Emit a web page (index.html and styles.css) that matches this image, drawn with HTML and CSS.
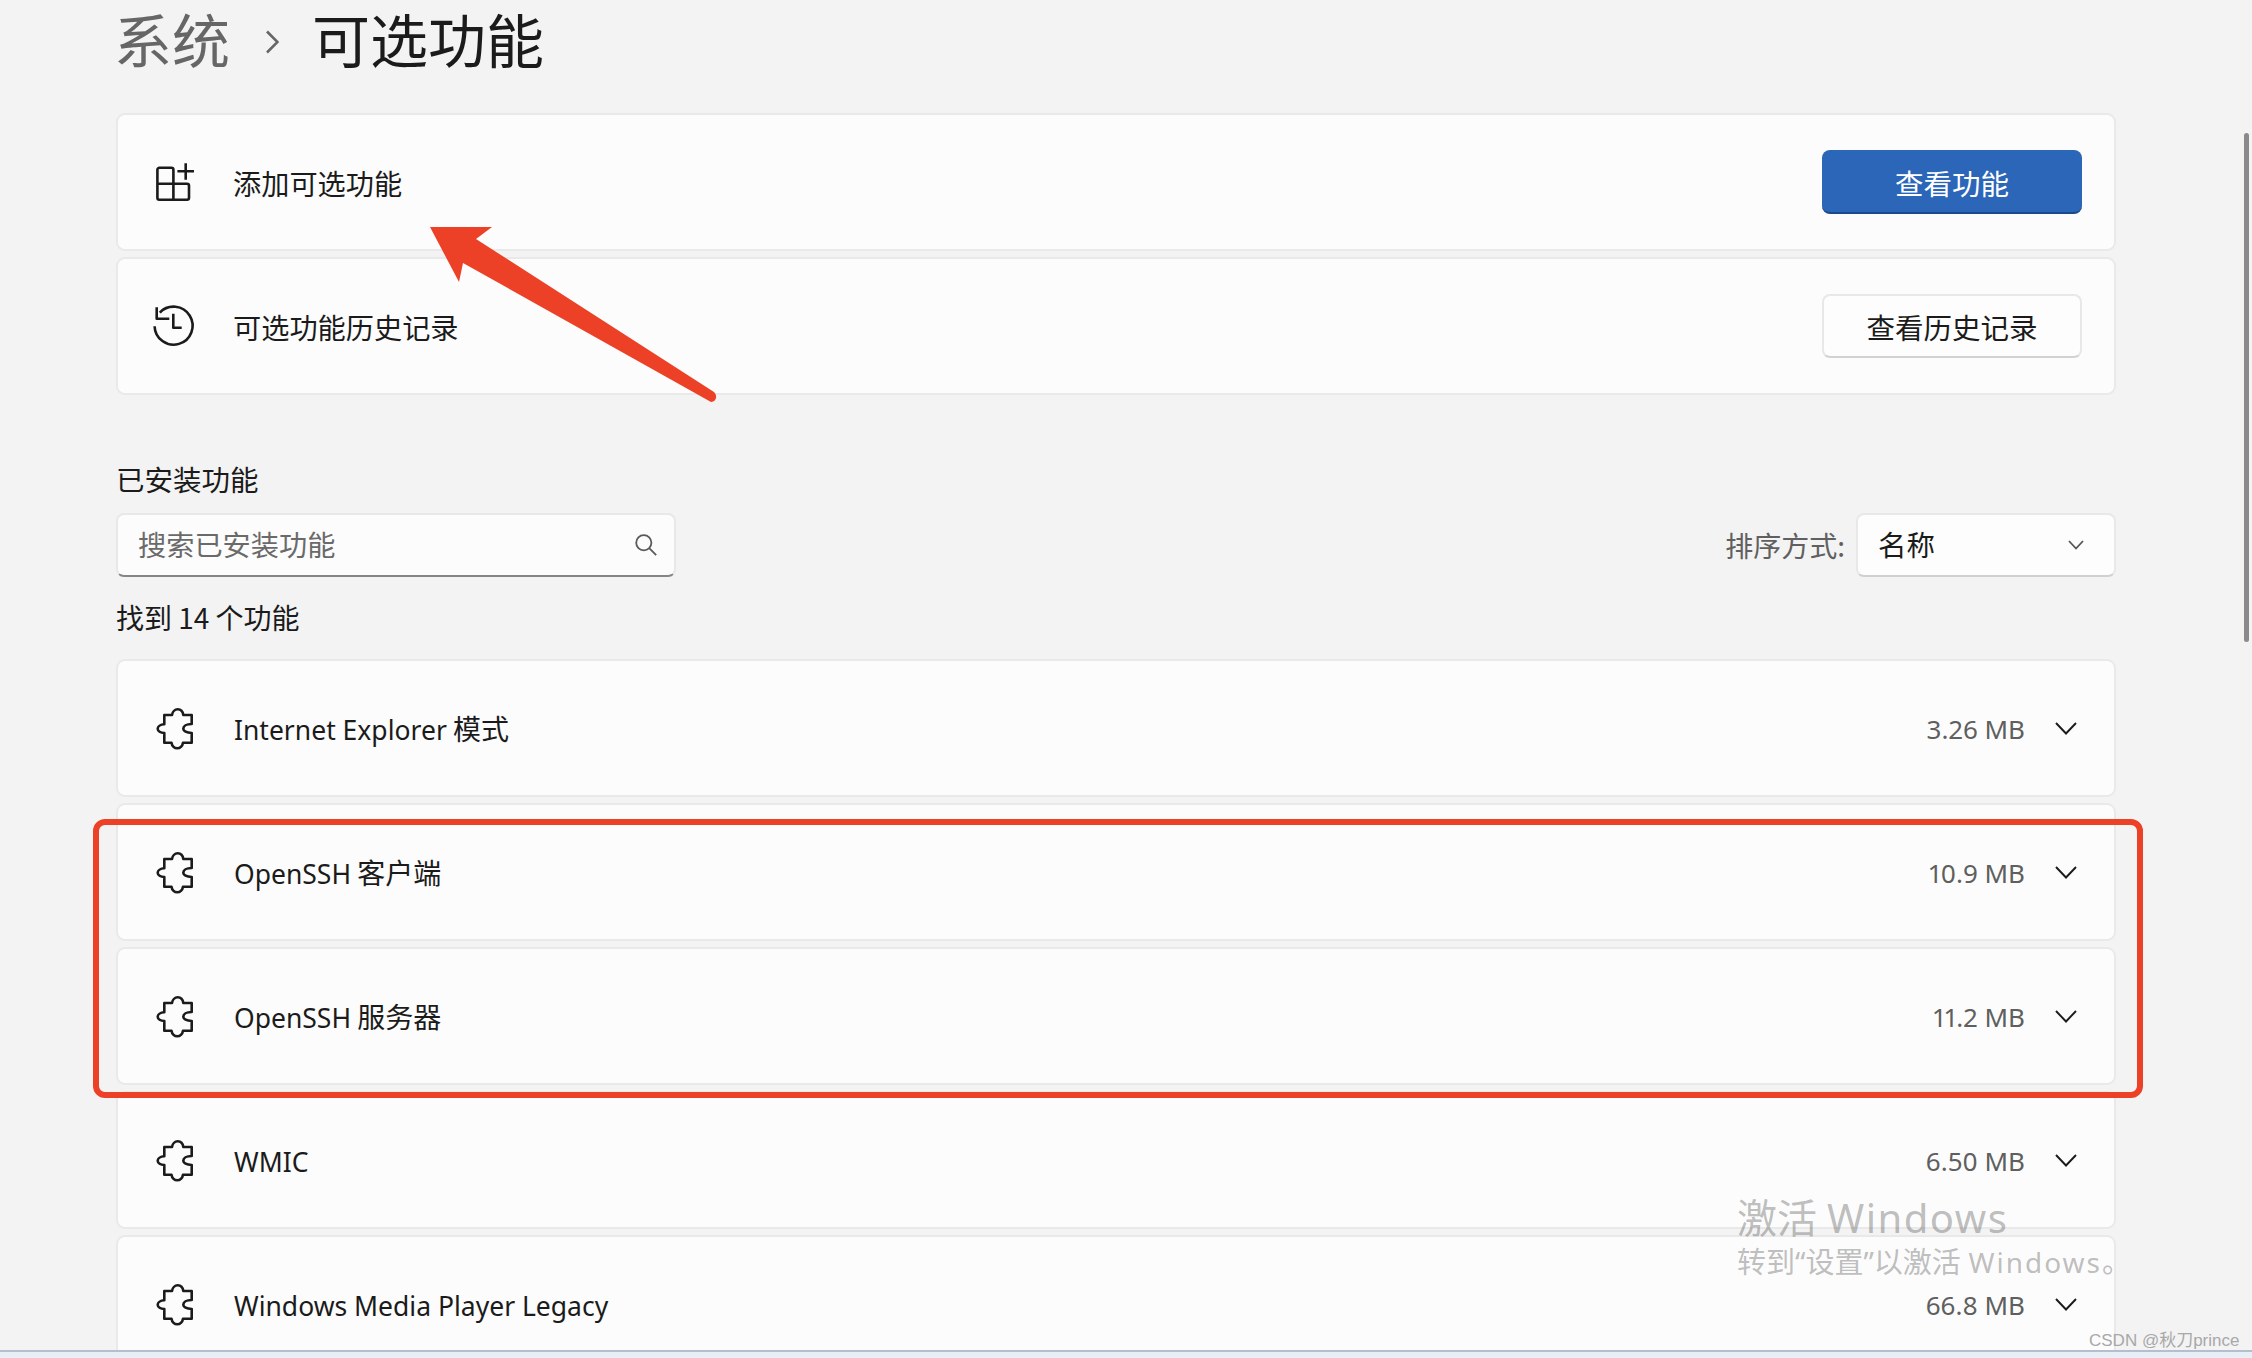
FILE: index.html
```html
<!DOCTYPE html>
<html lang="zh-CN">
<head>
<meta charset="utf-8">
<title>可选功能</title>
<link rel="stylesheet" href="styles.css">
</head>
<body>
<svg class="defs" width="0" height="0" aria-hidden="true">
  <symbol id="puzzle" viewBox="0 0 42 46">
    <path d="M10.3 9H18C18.5 5.5 21 3.3 23.7 3.3C26.4 3.3 28.8 5.5 29.3 9H37.7V18C32.5 18 29.3 20 29.3 22.7C29.3 25 32.5 27 37.7 27V36.7H29C28.5 40 26 42.3 23.2 42.3C20.5 42.3 18 40 17.5 36.7H10.3V27C6.5 26.8 3.7 25 3.7 22.7C3.7 20.4 6.5 18.5 10.3 18.3Z"/>
  </symbol>
  <symbol id="chev" viewBox="0 0 22 13">
    <path d="M1 1L11 11.5L21 1"/>
  </symbol>
</svg>
<main class="page">
  <header class="crumbs">
    <span class="crumb-parent">系统</span>
    <svg class="crumb-sep" viewBox="0 0 14 24"><path d="M2 1.5L12.5 12L2 22.5"/></svg>
    <h1 class="crumb-current">可选功能</h1>
  </header>

  <section class="stack">
    <div class="card">
      <svg class="card-icon" viewBox="0 0 42 46"><path d="M3.4 24.8V10.8a2 2 0 0 1 2-2H17.4a2 2 0 0 1 2 2V40.8M3.4 24.8H33a2 2 0 0 1 2 2V38.8a2 2 0 0 1-2 2H5.4a2 2 0 0 1-2-2ZM31.7 4.2V20.8M23.4 12.2H40"/></svg>
      <span class="card-title card-title-cjk">添加可选功能</span>
      <button class="btn btn-primary">查看功能</button>
    </div>
    <div class="card">
      <svg class="card-icon" viewBox="0 0 42 46"><path d="M5.8 9.6A19 19 0 1 1 .6 23.2M2.7 4.2V15.8H15.3M19.3 10.8V24.8H27.7"/></svg>
      <span class="card-title card-title-cjk">可选功能历史记录</span>
      <button class="btn">查看历史记录</button>
    </div>
  </section>

  <h2 class="section-label">已安装功能</h2>
  <div class="filters">
    <div class="search">
      <span class="search-text">搜索已安装功能</span>
      <svg class="search-icon" viewBox="0 0 22 22"><circle cx="8.8" cy="8.8" r="7.6"/><path d="M14.2 14.2L21.2 21.2"/></svg>
    </div>
    <div class="sort">
      <span class="sort-label">排序方式:</span>
      <div class="select">
        <span class="select-value">名称</span>
        <svg class="select-chev" viewBox="0 0 16 10"><path d="M1 1L8 8.5L15 1"/></svg>
      </div>
    </div>
  </div>
  <p class="count">找到 14 个功能</p>

  <section class="stack feature-list">
    <div class="card">
      <svg class="card-icon"><use href="#puzzle"/></svg>
      <span class="card-title"><span class="latin">Internet Explorer</span> 模式</span>
      <span class="size">3.26 MB</span>
      <svg class="row-chev"><use href="#chev"/></svg>
    </div>
    <div class="card">
      <svg class="card-icon"><use href="#puzzle"/></svg>
      <span class="card-title"><span class="latin">OpenSSH</span> 客户端</span>
      <span class="size">10.9 MB</span>
      <svg class="row-chev"><use href="#chev"/></svg>
    </div>
    <div class="card">
      <svg class="card-icon"><use href="#puzzle"/></svg>
      <span class="card-title"><span class="latin">OpenSSH</span> 服务器</span>
      <span class="size">11.2 MB</span>
      <svg class="row-chev"><use href="#chev"/></svg>
    </div>
    <div class="card">
      <svg class="card-icon"><use href="#puzzle"/></svg>
      <span class="card-title"><span class="latin">WMIC</span></span>
      <span class="size">6.50 MB</span>
      <svg class="row-chev"><use href="#chev"/></svg>
    </div>
    <div class="card">
      <svg class="card-icon"><use href="#puzzle"/></svg>
      <span class="card-title"><span class="latin">Windows Media Player Legacy</span></span>
      <span class="size">66.8 MB</span>
      <svg class="row-chev"><use href="#chev"/></svg>
    </div>
  </section>
</main>

<div class="scrollbar"></div>
<div class="red-box"></div>
<svg class="red-arrow" viewBox="0 0 300 190">
  <path d="M10 7H72L56 19L294 172C298 176 296 182 291 182L43 43L39 62Z"/>
</svg>
<div class="activate">
  <div class="activate-big">激活<span class="activate-latin">Windows</span></div>
  <div class="activate-small">转到“设置”以激活 <span class="activate-latin">Windows</span>。</div>
</div>
<div class="bottom-strip"></div>
<div class="credit">CSDN @秋刀prince</div>
</body>
</html>
```

FILE: styles.css
```css
* { box-sizing: border-box; }
html, body { margin: 0; height: 100%; overflow: hidden; }
body {
  position: relative;
  width: 2252px;
  height: 1358px;
  background: #f3f3f3;
  color: #1b1b1b;
  font-family: "Noto Sans CJK SC", "Noto Sans", sans-serif;
  font-size: 28px;
}
.defs { position: absolute; }
.page { width: 2116px; padding-left: 116px; }

.crumbs { display: flex; align-items: center; height: 113px; padding-bottom: 37px; }
.crumb-parent { flex: none; font-size: 58px; line-height: 76px; color: #666; width: 116px; margin-left: -2px; white-space: nowrap; }
.crumb-sep { flex: none; width: 14px; height: 24px; margin: 7px 33px 0 35px; fill: none; stroke: #666; stroke-width: 2.6; }
.crumb-current { margin: 0; font-size: 58px; line-height: 76px; font-weight: 400; color: #1b1b1b; white-space: nowrap; }

.stack { display: flex; flex-direction: column; gap: 6px; }
.card {
  display: flex;
  align-items: center;
  height: 138px;
  padding: 0 32px 0 38px;
  background: #fcfcfc;
  border: 2px solid #e9e9e9;
  border-radius: 9px;
}
.feature-list .card { padding-top: 2px; }
.card-icon {
  flex: none;
  width: 42px;
  height: 46px;
  margin-right: 38px;
  margin-left: -2px;
  overflow: visible;
  fill: none;
  stroke: #1b1b1b;
  stroke-width: 2.6;
  stroke-linejoin: round;
}
.card-title { flex: 1; line-height: 40px; white-space: nowrap; }
.card-title-cjk { font-size: 28.2px; padding-top: 2px; margin-left: -1px; }
.latin { font-family: "Noto Sans", "Noto Sans CJK SC", sans-serif; font-size: 26.5px; }

.btn {
  flex: none;
  width: 260px;
  height: 64px;
  padding: 0;
  font: inherit;
  font-size: 28.5px;
  color: #1b1b1b;
  background: #fdfdfd;
  border: 2px solid #e8e8e8;
  border-bottom-color: #d2d2d2;
  border-radius: 8px;
}
.btn-primary {
  padding-top: 2px;
  color: #fff;
  background: #2b66b9;
  border: 0;
  border-bottom: 2px solid #1b4a8c;
}

.section-label { margin: 64px 0 14px; font-size: 28.5px; line-height: 40px; font-weight: 400; }
.filters { display: flex; justify-content: space-between; align-items: center; height: 64px; }
.search {
  display: flex;
  align-items: center;
  justify-content: space-between;
  width: 560px;
  height: 64px;
  padding: 0 17px 0 20px;
  background: #fcfcfc;
  border: 2px solid #e8e8e8;
  border-bottom: 2px solid #858585;
  border-radius: 8px;
}
.search-text { color: #6a6a6a; font-size: 28.2px; line-height: 40px; margin-top: -2px; }
.search-icon { width: 22px; height: 22px; fill: none; stroke: #5a5a5a; stroke-width: 1.8; }
.sort { display: flex; align-items: center; gap: 11px; }
.sort-label { color: #606060; line-height: 40px; margin-top: -1px; }
.select {
  display: flex;
  align-items: center;
  justify-content: space-between;
  width: 260px;
  height: 64px;
  padding: 0 30px 0 20px;
  font-size: 28.5px;
  background: #fdfdfd;
  border: 2px solid #e8e8e8;
  border-bottom-color: #d0d0d0;
  border-radius: 8px;
}
.select-value { line-height: 40px; margin-top: -2px; }
.select-chev { width: 16px; height: 10px; fill: none; stroke: #555; stroke-width: 1.8; }
.count { margin: 20px 0 22px; line-height: 40px; }

.size { flex: none; color: #5f5f5f; font-family: "Noto Sans", sans-serif; font-size: 26px; font-variant-numeric: proportional-nums; line-height: 40px; }
.row-chev { flex: none; width: 22px; height: 13px; margin: 0 5px 2px 30px; overflow: visible; fill: none; stroke: #1b1b1b; stroke-width: 1.9; }

.scrollbar {
  position: absolute;
  left: 2244px;
  top: 133px;
  width: 5px;
  height: 509px;
  background: #8a8a8a;
  border-radius: 3px;
}
.red-box {
  position: absolute;
  left: 93px;
  top: 819px;
  width: 2050px;
  height: 279px;
  border: 6px solid #ec4127;
  border-radius: 12px;
}
.red-arrow {
  position: absolute;
  left: 420px;
  top: 220px;
  width: 300px;
  height: 190px;
  fill: #ec4127;
}
.activate {
  position: absolute;
  left: 1737px;
  top: 1192px;
  color: rgba(90, 90, 90, 0.4);
  white-space: nowrap;
  font-family: "Noto Sans", "Noto Sans CJK SC", sans-serif;
}
.activate-big { font-size: 40px; line-height: 52px; }
.activate-big .activate-latin { margin-left: 10px; letter-spacing: 1.5px; }
.activate-small { font-size: 29px; line-height: 36px; }
.activate-latin { letter-spacing: 2px; }
.activate-small .activate-latin { font-size: 28px; }
.bottom-strip {
  position: absolute;
  left: 0;
  right: 0;
  top: 1350px;
  height: 8px;
  background: #e7eef6;
  border-top: 2px solid #b4bfce;
}
.credit {
  position: absolute;
  left: 2089px;
  top: 1331px;
  font-family: "Liberation Sans", "Noto Sans CJK SC", sans-serif;
  font-size: 17px;
  line-height: 20px;
  color: #a8a8a8;
  white-space: nowrap;
}
```
